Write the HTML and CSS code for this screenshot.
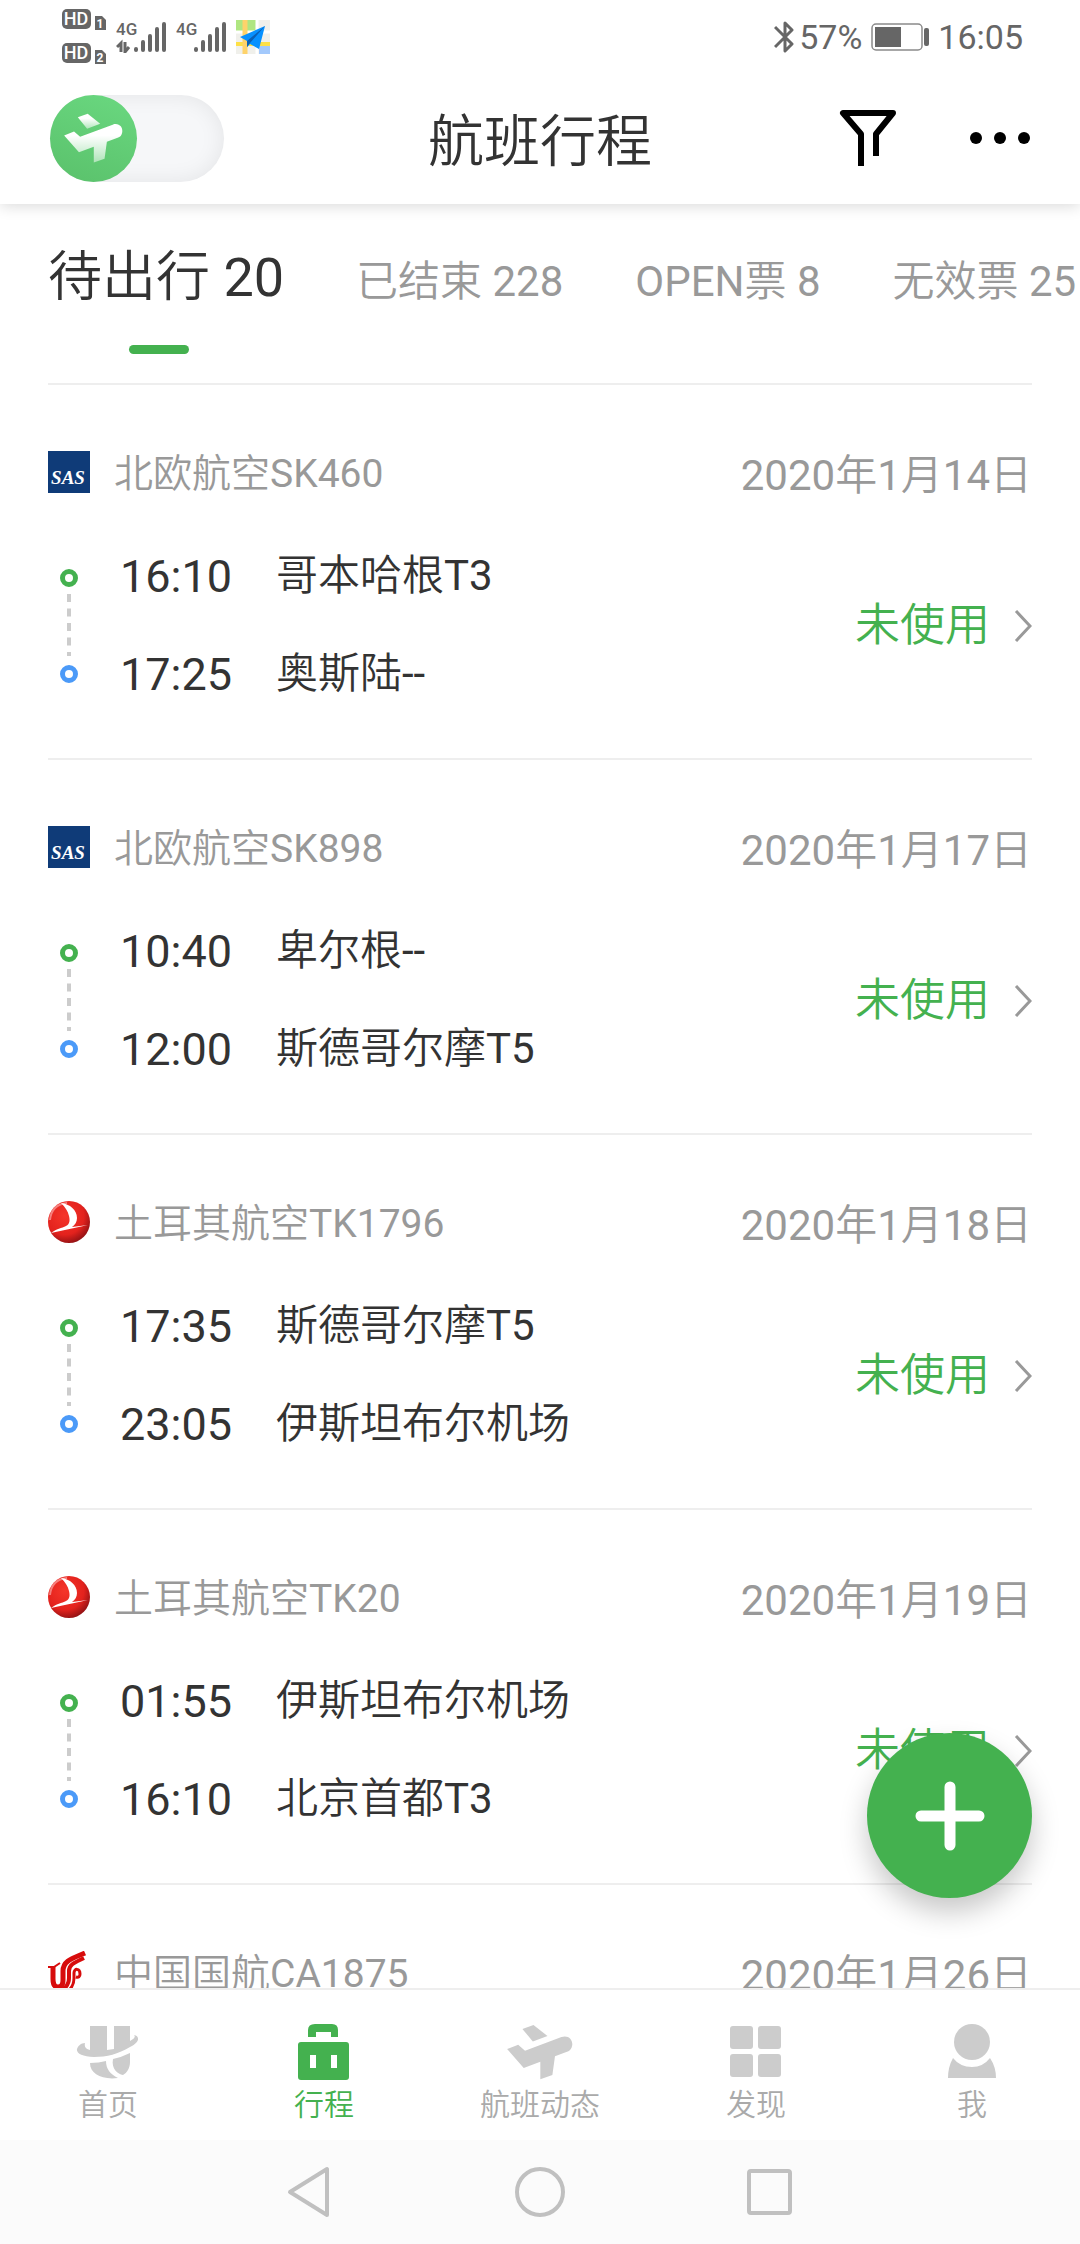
FILE: index.html
```html
<!DOCTYPE html>
<html lang="zh-CN">
<head>
<meta charset="utf-8">
<meta name="viewport" content="width=device-width, initial-scale=1">
<title>航班行程</title>
<link rel="stylesheet" href="styles.css">
</head>
<body>
<svg class="defs" aria-hidden="true">
  <defs>
    <linearGradient id="plane-fade" x1="0" y1="0" x2="0" y2="1">
      <stop offset="0.3" stop-color="#fff"/>
      <stop offset="1" stop-color="#fff" stop-opacity="0.5"/>
    </linearGradient>
    <radialGradient id="tk-ball" cx="0.4" cy="0.35" r="0.7">
      <stop offset="0" stop-color="#f5352a"/>
      <stop offset="0.65" stop-color="#e3221d"/>
      <stop offset="1" stop-color="#8a1013"/>
    </radialGradient>
    <symbol id="sas" viewBox="0 0 42 42">
      <rect width="42" height="42" fill="#0f3b78"/>
      <text x="20" y="33" text-anchor="middle" class="sas-text">SAS</text>
    </symbol>
    <symbol id="tk" viewBox="0 0 42 42">
      <circle cx="21" cy="21" r="21" fill="url(#tk-ball)"/>
      <path d="M2 19C3 9 9 3 19 2" fill="none" stroke="#fbb" stroke-width="2" opacity=".6"/>
      <path d="M13 2C22 3 29 9 29 17C29 21 27 24 24 26L40 24C28 27 15 29 3 32C8 28 14 27 18 25C22 23 22 19 21 15C20 10 17 6 13 2Z" fill="#fff"/>
    </symbol>
    <symbol id="ca" viewBox="0 0 42 42">
      <g fill="none" stroke="#d70c0c">
        <path d="M5 15V28Q5 36 10 36Q15 36 15 29V20C15 9 26 7 37 2" stroke-width="5"/>
        <path d="M16 38Q21 33 21 27V20C21 13 28 11 36 7" stroke-width="4"/>
        <path d="M22 38Q26 34 26 27V22C26 17 32 17 32 23Q32 27 28 26" stroke-width="3"/>
        <path d="M0 16H6L12 12" stroke-width="2"/>
      </g>
    </symbol>
    <symbol id="plane" viewBox="48 40 202 172">
      <path d="M95 55L129 43L172 77L127 94Z" class="plane-wing"/>
      <path d="M48 117L82 104L103 122L215 80C236 73 250 88 248 105C246 117 241 122 232 125L195 139L187 197L150 210V156L99 175Z"/>
    </symbol>
    <symbol id="chevron" viewBox="0 0 18 32">
      <path d="M2 1L16 16L2 31" fill="none" stroke="#999" stroke-width="3"/>
    </symbol>
    <symbol id="track" viewBox="0 0 18 115">
      <circle cx="9" cy="9" r="6.5" fill="none" stroke="#44b14f" stroke-width="5"/>
      <path d="M9 25V87" fill="none" stroke="#ccc" stroke-width="4" stroke-dasharray="8 6.5"/>
      <circle cx="9" cy="105" r="6.5" fill="none" stroke="#4b9af8" stroke-width="5"/>
    </symbol>
    <symbol id="bars" viewBox="0 0 50 32">
      <g stroke="#666" stroke-width="4" stroke-linecap="round">
        <path d="M20 28V29M27 21V29M34 15V29M41 8V29M48 3V29"/>
      </g>
      <text x="0" y="14" class="net-text">4G</text>
    </symbol>
  </defs>
</svg>

<div class="app">
  <div class="statusbar">
    <div class="status-group">
      <svg width="44" height="56" viewBox="0 0 44 56" role="img" aria-label="HD">
        <rect x="0" y="0" width="29" height="20" rx="5" fill="#666"/>
        <rect x="0" y="34" width="29" height="20" rx="5" fill="#666"/>
        <path d="M33 7H40L44 11V21H33ZM33 41H40L44 45V55H33Z" fill="#666"/>
        <text x="14" y="16" text-anchor="middle" class="hd-text">HD</text>
        <text x="14" y="50" text-anchor="middle" class="hd-text">HD</text>
        <text x="38" y="19" text-anchor="middle" class="sim-text">1</text>
        <text x="38" y="53" text-anchor="middle" class="sim-text">2</text>
      </svg>
      <svg width="50" height="32" viewBox="0 0 50 32" role="img" aria-label="4G 信号">
        <use href="#bars"/>
        <path d="M1 26L5 22V31M9 21V31L13 26" fill="none" stroke="#666" stroke-width="3"/>
      </svg>
      <svg width="50" height="32" role="img" aria-label="4G 信号"><use href="#bars"/></svg>
      <svg width="34" height="34" viewBox="0 0 34 34" role="img" aria-label="地图">
        <rect width="34" height="34" fill="#f0f0eb"/>
        <path d="M0 0H20V11H0Z" fill="#afe681"/>
        <path d="M23 26H34V34H23Z" fill="#a3c9fc"/>
        <path d="M0 12H34M21 0V34" stroke="#fff" stroke-width="3"/>
        <path d="M0 24H34" stroke="#fee047" stroke-width="4"/>
        <path d="M9 0V34" stroke="#fed36b" stroke-width="5"/>
        <path d="M29 6L4 17L11 21V27L14 24L23 29Z" fill="#0791ff"/>
        <path d="M29 6L11 21V27L14 23Z" fill="#0960b5"/>
      </svg>
    </div>
    <div class="status-group status-right">
      <svg width="20" height="34" viewBox="0 0 20 34" role="img" aria-label="蓝牙">
        <path d="M1 7L18 24L11 31V3L18 10L1 27" fill="none" stroke="#666" stroke-width="3" stroke-linejoin="round"/>
      </svg>
      <span class="battery-text">57%</span>
      <svg class="battery" width="58" height="28" viewBox="0 0 58 28" role="img" aria-label="电池">
        <rect x="1" y="1" width="50" height="26" rx="4" fill="none" stroke="#8a8a8a" stroke-width="1.5"/>
        <rect x="4" y="4" width="26" height="20" fill="#666"/>
        <rect x="53" y="5" width="5" height="18" rx="2" fill="#666"/>
      </svg>
      <span>16:05</span>
    </div>
  </div>

  <header class="header">
    <label class="switch">
      <input type="checkbox" aria-label="切换视图">
      <span class="knob"><svg width="59" height="50"><use href="#plane"/></svg></span>
    </label>
    <h1 class="title">航班行程</h1>
    <div class="actions">
      <button class="icon-btn" aria-label="筛选">
        <svg width="58" height="56" viewBox="0 0 58 56"><path d="M22 56V24L4 3H54L37 24V46" fill="none" stroke="#000" stroke-width="6" stroke-linejoin="round"/></svg>
      </button>
      <button class="icon-btn" aria-label="更多">
        <svg width="60" height="12" viewBox="0 0 60 12"><circle cx="6" cy="6" r="6"/><circle cx="30" cy="6" r="6"/><circle cx="54" cy="6" r="6"/></svg>
      </button>
    </div>
  </header>

  <div class="content">
    <main class="scroller">
      <div class="tabs" role="tablist">
        <button class="tab tab-active" role="tab" aria-selected="true">待出行 20</button>
        <button class="tab" role="tab">已结束 228</button>
        <button class="tab" role="tab">OPEN票 8</button>
        <button class="tab" role="tab">无效票 25</button>
      </div>

      <article class="flight">
        <div class="flight-head">
          <svg class="logo"><use href="#sas"/></svg>
          <h2 class="airline">北欧航空SK460</h2>
          <time class="date">2020年1月14日</time>
        </div>
        <div class="flight-body">
          <svg class="track"><use href="#track"/></svg>
          <div class="legs">
            <span class="time">16:10</span><span class="city">哥本哈根T3</span>
            <span class="time">17:25</span><span class="city">奥斯陆--</span>
          </div>
          <a class="state" href="#sk460">未使用<svg class="chevron"><use href="#chevron"/></svg></a>
        </div>
      </article>

      <article class="flight">
        <div class="flight-head">
          <svg class="logo"><use href="#sas"/></svg>
          <h2 class="airline">北欧航空SK898</h2>
          <time class="date">2020年1月17日</time>
        </div>
        <div class="flight-body">
          <svg class="track"><use href="#track"/></svg>
          <div class="legs">
            <span class="time">10:40</span><span class="city">卑尔根--</span>
            <span class="time">12:00</span><span class="city">斯德哥尔摩T5</span>
          </div>
          <a class="state" href="#sk898">未使用<svg class="chevron"><use href="#chevron"/></svg></a>
        </div>
      </article>

      <article class="flight">
        <div class="flight-head">
          <svg class="logo"><use href="#tk"/></svg>
          <h2 class="airline">土耳其航空TK1796</h2>
          <time class="date">2020年1月18日</time>
        </div>
        <div class="flight-body">
          <svg class="track"><use href="#track"/></svg>
          <div class="legs">
            <span class="time">17:35</span><span class="city">斯德哥尔摩T5</span>
            <span class="time">23:05</span><span class="city">伊斯坦布尔机场</span>
          </div>
          <a class="state" href="#tk1796">未使用<svg class="chevron"><use href="#chevron"/></svg></a>
        </div>
      </article>

      <article class="flight">
        <div class="flight-head">
          <svg class="logo"><use href="#tk"/></svg>
          <h2 class="airline">土耳其航空TK20</h2>
          <time class="date">2020年1月19日</time>
        </div>
        <div class="flight-body">
          <svg class="track"><use href="#track"/></svg>
          <div class="legs">
            <span class="time">01:55</span><span class="city">伊斯坦布尔机场</span>
            <span class="time">16:10</span><span class="city">北京首都T3</span>
          </div>
          <a class="state" href="#tk20">未使用<svg class="chevron"><use href="#chevron"/></svg></a>
        </div>
      </article>

      <article class="flight">
        <div class="flight-head">
          <svg class="logo"><use href="#ca"/></svg>
          <h2 class="airline">中国国航CA1875</h2>
          <time class="date">2020年1月26日</time>
        </div>
      </article>
    </main>
    <button class="fab" aria-label="添加行程">
      <svg width="70" height="70" viewBox="0 0 70 70"><path d="M35 6V64M6 35H64" stroke="#fff" stroke-width="11" stroke-linecap="round"/></svg>
    </button>
  </div>

  <nav class="tabbar">
    <a class="nav-item" href="#home">
      <svg class="nav-icon" viewBox="0 0 62 56">
        <path d="M13 2H30V26L37 25V2H53V17C57 15 59 13 57 11C63 12 63 18 53 23C41 30 30 33 17 33C5 33 -1 29 0 25C1 22 4 19 8 19C7 23 9 25 13 26Z"/>
        <path d="M13 39Q22 39 29 37C29 45 33 50 41 54C25 56 13 50 13 39Z"/>
        <path d="M36 35Q45 33 53 29V38C53 44 50 49 46 51C41 50 34 45 36 35Z"/>
      </svg>
      <span>首页</span>
    </a>
    <a class="nav-item nav-active" href="#trips" aria-current="page">
      <svg class="nav-icon" viewBox="0 0 52 56">
        <path d="M10 13V6Q10 0 17 0H34Q40 0 40 6V13H33V8H18V13Z"/>
        <path fill-rule="evenodd" d="M3 18H48Q51 18 51 21V53Q51 56 48 56H3Q0 56 0 53V21Q0 18 3 18ZM12 31V44H18V31ZM33 31V44H39V31Z"/>
      </svg>
      <span>行程</span>
    </a>
    <a class="nav-item" href="#status">
      <svg class="nav-icon"><use href="#plane"/></svg>
      <span>航班动态</span>
    </a>
    <a class="nav-item" href="#discover">
      <svg class="nav-icon" viewBox="0 0 52 56">
        <rect x="0" y="2" width="23" height="23" rx="3"/><rect x="28" y="2" width="23" height="23" rx="3"/>
        <rect x="0" y="30" width="23" height="23" rx="3"/><rect x="28" y="30" width="23" height="23" rx="3"/>
      </svg>
      <span>发现</span>
    </a>
    <a class="nav-item" href="#me">
      <svg class="nav-icon" viewBox="0 0 50 56">
        <circle cx="25" cy="18" r="18"/>
        <path d="M6 34Q13 43 25 43Q36 43 43 34Q49 43 49 54H1Q1 43 6 34Z"/>
      </svg>
      <span>我</span>
    </a>
  </nav>

  <div class="sysnav">
    <button class="icon-btn" aria-label="返回">
      <svg width="50" height="52" viewBox="0 0 50 52"><path d="M6 26L43 3V49Z" fill="none" stroke="#c0c0c0" stroke-width="4" stroke-linejoin="round"/></svg>
    </button>
    <button class="icon-btn" aria-label="主屏幕">
      <svg width="50" height="52" viewBox="0 0 50 52"><circle cx="25" cy="26" r="23" fill="none" stroke="#c0c0c0" stroke-width="4"/></svg>
    </button>
    <button class="icon-btn" aria-label="最近任务">
      <svg width="50" height="52" viewBox="0 0 50 52"><rect x="3" y="5" width="41" height="42" rx="2" fill="none" stroke="#c0c0c0" stroke-width="4"/></svg>
    </button>
  </div>
</div>
</body>
</html>
```
FILE: styles.css
```css
:root {
  --green: #44b14f;
  --ink: #333;
  --muted: #999;
  --line: #eee;
  --side: 48px;
}

* {
  box-sizing: border-box;
}

body {
  margin: 0;
  background: #fff;
  color: var(--ink);
  font-family: Roboto, "Noto Sans CJK SC DemiLight", "Noto Sans CJK SC Light", "Noto Sans CJK SC", sans-serif;
}

h1,
h2 {
  margin: 0;
  font-weight: 400;
}

button {
  margin: 0;
  padding: 0;
  border: 0;
  background: none;
  color: inherit;
  font: inherit;
}

a {
  color: inherit;
  text-decoration: none;
}

svg {
  display: block;
  flex: none;
}

.defs {
  position: absolute;
  width: 0;
  height: 0;
}

.app {
  display: flex;
  flex-direction: column;
  height: 100vh;
}

/* Status bar */

.statusbar {
  display: flex;
  justify-content: space-between;
  align-items: center;
  height: 72px;
  padding: 2px 57px 0 62px;
  color: #666;
  font-size: 34px;
  line-height: 40px;
}

.status-group {
  display: flex;
  align-items: center;
  gap: 10px;
}

.status-right {
  gap: 9px;
}

.battery-text {
  margin-left: -4px;
}

.hd-text {
  fill: #fff;
  font: 500 18px Roboto, sans-serif;
}

.sim-text {
  fill: #fff;
  font: 700 12px Roboto, sans-serif;
}

.net-text {
  fill: #666;
  font: 500 17px Roboto, sans-serif;
}

/* Header */

.header {
  position: relative;
  z-index: 1;
  display: grid;
  grid-template-columns: 1fr auto 1fr;
  align-items: center;
  height: 132px;
  padding: 0 50px;
  background: #fff;
  box-shadow: 0 2px 14px rgba(0, 0, 0, 0.15);
  clip-path: inset(0 0 -20px 0);
}

.switch {
  display: flex;
  width: 174px;
  height: 87px;
  border-radius: 44px;
  background: #f6f7f9;
  box-shadow: inset 0 0 22px rgba(0, 0, 0, 0.08);
}

.switch input {
  position: absolute;
  opacity: 0;
}

.knob {
  display: flex;
  align-items: center;
  justify-content: center;
  width: 87px;
  height: 87px;
  border-radius: 50%;
  background: linear-gradient(200deg, #6ad880, #5ac16b);
  fill: url(#plane-fade);
}

.knob .plane-wing {
  opacity: 0.6;
}

.title {
  padding-top: 8px;
  font-size: 56px;
  line-height: 64px;
}

.actions {
  display: flex;
  align-items: center;
  justify-content: flex-end;
  gap: 73px;
}

/* Trip list */

.content {
  position: relative;
  flex: 1;
  min-height: 0;
}

.scroller {
  height: 100%;
  padding: 0 var(--side);
  overflow: hidden auto;
  scrollbar-width: none;
}

.tabs {
  display: flex;
  align-items: baseline;
  gap: 72px;
  height: 179px;
  margin-right: calc(0px - var(--side));
  padding-top: 44px;
  overflow: hidden;
}

.tab {
  flex: none;
  color: var(--muted);
  font-size: 42px;
  line-height: 60px;
  text-align: left;
  white-space: nowrap;
}

.tab-active {
  color: var(--ink);
  font-size: 54px;
}

.tab-active::after {
  content: "";
  display: block;
  width: 60px;
  height: 9px;
  margin: 37px 0 0 81px;
  border-radius: 5px;
  background: var(--green);
}

.flight {
  padding: 64px 0 53px;
  border-top: 2px solid var(--line);
}

.flight-head {
  display: flex;
  align-items: flex-start;
  color: var(--muted);
}

.logo {
  width: 42px;
  height: 42px;
  margin: 2px 24px 0 0;
}

.sas-text {
  fill: #fff;
  font: italic 700 19px "Liberation Serif", serif;
}

.airline {
  flex: 1;
  font-size: 39px;
  line-height: 50px;
}

.date {
  font-size: 42px;
  line-height: 54px;
}

.flight-body {
  display: flex;
  align-items: center;
  margin-top: 44px;
}

.track {
  width: 42px;
  height: 115px;
}

.legs {
  flex: 1;
  display: grid;
  grid-template-columns: 156px 1fr;
  grid-auto-rows: 60px;
  row-gap: 38px;
  margin-left: 30px;
}

.time {
  font-size: 45px;
  line-height: 60px;
}

.city {
  font-size: 42px;
  line-height: 58px;
}

.state {
  display: flex;
  align-items: center;
  gap: 24px;
  color: var(--green);
  font-size: 45px;
  line-height: 60px;
}

.chevron {
  width: 18px;
  height: 32px;
}

.fab {
  position: absolute;
  right: var(--side);
  bottom: 90px;
  display: flex;
  align-items: center;
  justify-content: center;
  width: 165px;
  height: 165px;
  border-radius: 50%;
  background: var(--green);
  box-shadow: 0 14px 28px rgba(0, 0, 0, 0.22);
}

/* Bottom navigation */

.tabbar {
  display: grid;
  grid-template-columns: repeat(5, 1fr);
  padding: 34px 0 17px;
  border-top: 2px solid var(--line);
  color: #aaa;
  font-size: 30px;
  line-height: 36px;
}

.nav-item {
  display: flex;
  flex-direction: column;
  align-items: center;
  gap: 7px;
}

.nav-icon {
  width: 68px;
  height: 56px;
  fill: #ccc;
}

.nav-active {
  color: var(--green);
}

.nav-active .nav-icon {
  fill: var(--green);
}

/* System buttons */

.sysnav {
  display: flex;
  align-items: center;
  justify-content: center;
  gap: 181px;
  height: 104px;
  background: #fbfbfb;
}
```
